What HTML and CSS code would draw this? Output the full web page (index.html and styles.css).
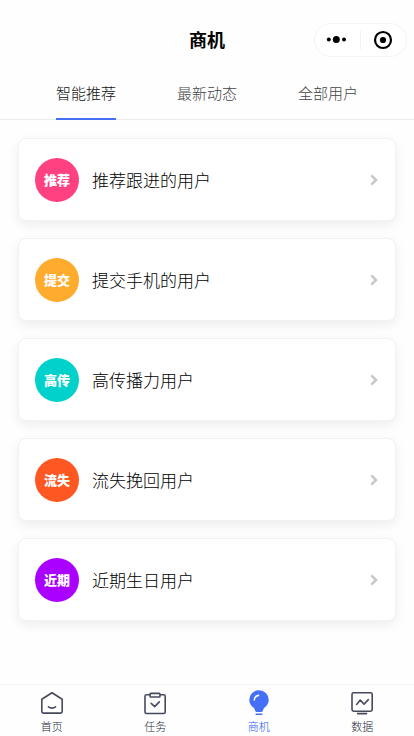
FILE: index.html
```html
<!DOCTYPE html>
<html lang="zh-CN">
<head>
<meta charset="utf-8">
<title>商机</title>
<link rel="stylesheet" href="styles.css">
</head>
<body>
<div class="app">
  <header class="navbar">
    <h1 class="title">商机</h1>
    <div class="capsule">
      <svg width="94" height="36" viewBox="0 0 94 36">
        <rect x="1.500" y="1.500" width="92" height="33" rx="16.500" fill="#fff" stroke="#f4f4f4"/>
        <path d="M47.500 8v20" stroke="#f2f2f2"/>
        <circle cx="15.800" cy="17.500" r="2"/><circle cx="23.300" cy="17.500" r="3.500"/><circle cx="31" cy="17.500" r="2"/>
        <circle cx="70" cy="18" r="8" fill="none" stroke="#000" stroke-width="2.200"/><circle cx="70" cy="18" r="3.100"/>
      </svg>
    </div>
  </header>
  <nav class="tabs">
    <a class="tab active">智能推荐</a>
    <a class="tab">最新动态</a>
    <a class="tab">全部用户</a>
  </nav>
  <main class="list">
    <section class="card"><span class="badge pink">推荐</span><span class="label">推荐跟进的用户</span><svg class="arrow" width="8" height="12" viewBox="0 0 8 12"><path d="M1.300 1.300 6 6 1.300 10.700"/></svg></section>
    <section class="card"><span class="badge orange">提交</span><span class="label">提交手机的用户</span><svg class="arrow" width="8" height="12" viewBox="0 0 8 12"><path d="M1.300 1.300 6 6 1.300 10.700"/></svg></section>
    <section class="card"><span class="badge teal">高传</span><span class="label">高传播力用户</span><svg class="arrow" width="8" height="12" viewBox="0 0 8 12"><path d="M1.300 1.300 6 6 1.300 10.700"/></svg></section>
    <section class="card"><span class="badge red">流失</span><span class="label">流失挽回用户</span><svg class="arrow" width="8" height="12" viewBox="0 0 8 12"><path d="M1.300 1.300 6 6 1.300 10.700"/></svg></section>
    <section class="card"><span class="badge purple">近期</span><span class="label">近期生日用户</span><svg class="arrow" width="8" height="12" viewBox="0 0 8 12"><path d="M1.300 1.300 6 6 1.300 10.700"/></svg></section>
  </main>
  <footer class="tabbar">
    <a class="item">
      <svg class="icon" width="28" height="28" viewBox="0 0 28 28"><path d="M14 3.800 24.200 10.200v12.300q0 1.600-1.600 1.600H5.400q-1.600 0-1.600-1.600V10.200Z"/><path d="M10.400 17.900q3.600 2.400 7.200 0"/></svg>
      <span>首页</span>
    </a>
    <a class="item">
      <svg class="icon" width="28" height="28" viewBox="0 0 28 28"><path d="M9 5.700H5.600Q4 5.700 4 7.300v15.600q0 1.600 1.600 1.600h17q1.600 0 1.600-1.600V7.300q0-1.600-1.600-1.600H19"/><rect x="9" y="4.400" width="10" height="3.600" rx=".8"/><path d="m10.200 14.400 3.500 3.200 4.600-4.700"/></svg>
      <span>任务</span>
    </a>
    <a class="item active">
      <svg class="icon" width="28" height="28" viewBox="0 0 28 28"><path class="fill" d="M14 1.200a9.700 9.700 0 0 1 9.700 9.700c0 3.600-1.900 6-4.700 8L17.700 22q-.4 1-1.300 1h-4.800q-.9 0-1.300-1L9 18.900c-2.800-2-4.700-4.400-4.700-8A9.700 9.700 0 0 1 14 1.200Z"/><path class="shine" d="M9.300 11q.3-4 4.200-4.600"/><path d="M11.200 25.300h5.600"/></svg>
      <span>商机</span>
    </a>
    <a class="item">
      <svg class="icon" width="28" height="28" viewBox="0 0 28 28"><rect x="4" y="3.800" width="20.200" height="18.400" rx="1.600"/><path d="m8.600 15.400 3.700-4.300 3.800 4.100 4.200-4.600M9.600 24.600h9"/></svg>
      <span>数据</span>
    </a>
  </footer>
</div>
</body>
</html>
```

FILE: styles.css
```css
* { box-sizing: border-box; }
body {
  margin: 0;
  background: #fefefe;
  color: #000;
  font-family: "Noto Sans CJK SC", sans-serif;
  font-weight: 300;
}
.app { height: 736px; display: flex; flex-direction: column; overflow: hidden; }
.navbar {
  height: 68px;
  padding: 22px 7px 0 0;
  display: grid;
  grid-template-columns: 101px 1fr 94px;
  column-gap: 6px;
}
.title { grid-column: 2; margin: 0; text-align: center; font-size: 18px; font-weight: 700; line-height: 35px; }
.capsule { grid-column: 3; height: 36px; }
.capsule svg { display: block; }
.tabs {
  height: 52px;
  display: flex;
  justify-content: center;
  gap: 61px;
  border-bottom: 1px solid #ebebeb;
}
.tab { height: 52px; font-size: 15px; line-height: 50px; color: #444; }
.tab.active { color: #111; border-bottom: 2px solid #4370f5; }
.list { flex: 1; padding: 18px 18px 0; display: flex; flex-direction: column; gap: 17px; }
.card {
  height: 83px;
  padding: 0 17px 0 16px;
  display: flex;
  align-items: center;
  background: #fff;
  border: 1px solid #f2f2f2;
  border-radius: 8px;
  box-shadow: 0 4px 12px rgba(0, 0, 0, .07);
}
.badge {
  width: 44px;
  height: 44px;
  border-radius: 50%;
  color: #fff;
  font-size: 13px;
  font-weight: 900;
  line-height: 44px;
  text-align: center;
}
.pink { background: #ff4081; }
.orange { background: #ffab2d; }
.teal { background: #00d2cb; }
.red { background: #ff5722; }
.purple { background: #aa00ff; }
.label { flex: 1; margin-left: 13px; padding-top: 1px; font-size: 17px; line-height: 26px; }
.arrow { fill: none; stroke: #c8c8c8; stroke-width: 2.600; }
.tabbar { height: 52px; display: flex; border-top: 1px solid #f2f2f2; }
.item {
  flex: 1;
  display: flex;
  flex-direction: column;
  align-items: center;
  padding-top: 4px;
  color: #464a5c;
  font-size: 11px;
  line-height: 18px;
}
.item.active { color: #4370f5; }
.item span { color: #252938; }
.item.active span { color: #2458f5; }
.icon { display: block; flex: none; fill: none; stroke: currentColor; stroke-width: 1.600; stroke-linecap: round; stroke-linejoin: round; }
.icon .fill { fill: currentColor; stroke: none; }
.icon .shine { stroke: #fff; }
```
